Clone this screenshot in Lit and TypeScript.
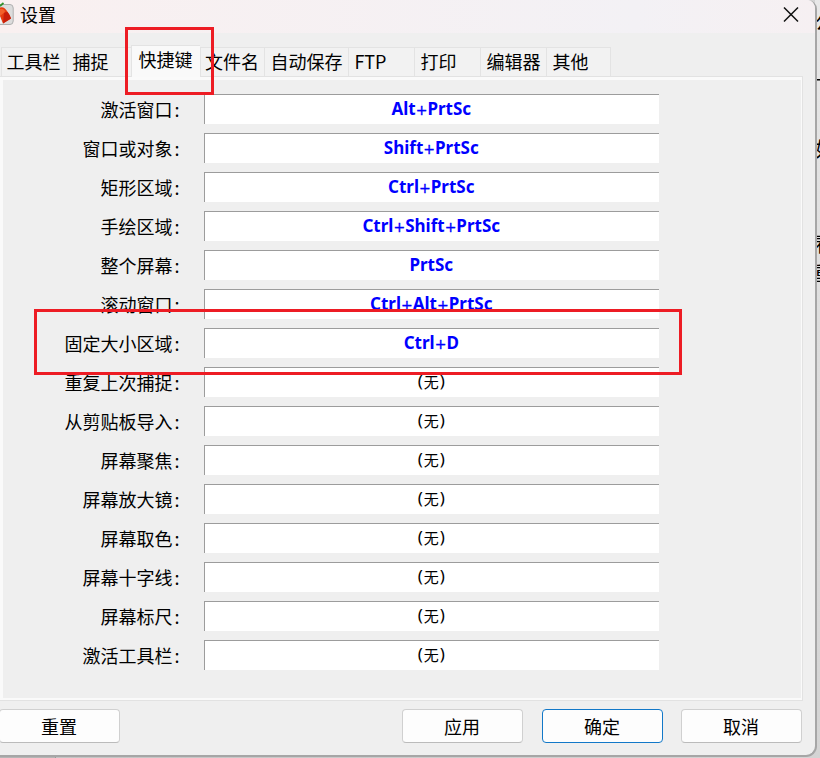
import { LitElement, html, css } from "lit";
import { customElement } from "lit/decorators.js";
import { classMap } from "lit/directives/class-map.js";
import { styleMap } from "lit/directives/style-map.js";

interface Tab { label: string; width: number; active?: boolean }

const TABS: Tab[] = [
  { label: "工具栏", width: 65 },
  { label: "捕捉", width: 65 },
  { label: "快捷键", width: 69, active: true },
  { label: "文件名", width: 64 },
  { label: "自动保存", width: 84 },
  { label: "FTP", width: 66 },
  { label: "打印", width: 66 },
  { label: "编辑器", width: 66 },
  { label: "其他", width: 65 },
];

const SHORTCUTS: [string, string][] = [
  ["激活窗口", "Alt+PrtSc"],
  ["窗口或对象", "Shift+PrtSc"],
  ["矩形区域", "Ctrl+PrtSc"],
  ["手绘区域", "Ctrl+Shift+PrtSc"],
  ["整个屏幕", "PrtSc"],
  ["滚动窗口", "Ctrl+Alt+PrtSc"],
  ["固定大小区域", "Ctrl+D"],
  ["重复上次捕捉", ""],
  ["从剪贴板导入", ""],
  ["屏幕聚焦", ""],
  ["屏幕放大镜", ""],
  ["屏幕取色", ""],
  ["屏幕十字线", ""],
  ["屏幕标尺", ""],
  ["激活工具栏", ""],
];

@customElement("app-root")
export class AppRoot extends LitElement {
  static styles = css`
    :host {
      display: block; position: relative; width: 820px; height: 758px; overflow: hidden;
      background: linear-gradient(90deg, #b5b5b5, #b5b5b5 55px, #999 55px, #999 56px, #c4c4c4 56px, #d4d4d4);
      font: 18px/24px "Noto Sans CJK SC", sans-serif; color: #000;
    }
    * { box-sizing: border-box; }
    .behind { position: absolute; left: 815px; top: 0; width: 5px; height: 758px; overflow: hidden;
      background: linear-gradient(#e8e8e8, #e0e0e0 30%, #d4d4d4); }
    .glyph { position: absolute; white-space: nowrap; font-size: 20px; line-height: 24px; }
    .window {
      position: relative; width: 817px; height: 757px; background: #efefef;
      border: solid #a6a6a6; border-width: 0 2px 2px 0; border-radius: 0 9px 11px 0;
      display: flex; flex-direction: column; overflow: hidden;
    }
    .title { height: 33px; flex: none; display: flex; background: linear-gradient(90deg, #f9f0f0, #f3f1f5 78%, #f6f0f2); }
    .logo { width: 14px; height: 26px; flex: none; }
    .name { margin: 2px 0 0 6px; flex: 1; }
    .close { width: 16px; height: 16px; margin: 7px 16.5px 0 0; }
    .tabs { height: 43px; flex: none; display: flex; align-items: flex-end; padding-left: 1px; }
    .tab { height: 29px; border: 1px solid #e3e3e3; border-width: 1px 0 0 1px; background: #f2f2f2; padding: 1px 0 0 5.4px; white-space: nowrap; flex: none; }
    .tab:first-child { padding-left: 4.5px; }
    .tab:last-child { border-right-width: 1px; }
    .tab.active { height: 32px; margin-bottom: -1px; position: relative; background: #f9f9f9; padding: 1px 0 0 6.5px; }
    .active + .tab { padding-left: 4px; }
    .panel { width: 803px; height: 625px; flex: none; border: 1px solid #e2e2e2; border-left: 0; }
    .inner { height: 623px; border: solid #fafafa; border-width: 3px 1px 2px 3px; padding-top: 14px; display: flex; flex-direction: column; gap: 9px; }
    .row { height: 30px; display: flex; }
    .label { width: 201px; padding: 3px 17.5px 0 0; text-align: right; white-space: nowrap; }
    .colon { display: inline-block; width: 14px; text-align: left; padding-left: 2px; }
    .field { width: 455px; height: 30px; background: #fff; border: solid #9c9c9c; border-width: 1px 0 0 1px; padding-right: 1.5px; display: flex; justify-content: center; white-space: nowrap; }
    .key { margin-top: 2px; font: bold 17px/24px "Noto Sans", sans-serif; color: #00f; }
    .plus { font: 14px/20px "DejaVu Sans", sans-serif; -webkit-text-stroke: 0.35px #00f; }
    .none { font-size: 15px; margin-top: 2px; display: flex; }
    .paren { font: 17px/22px "Noto Sans", sans-serif; width: 7px; text-align: center; }
    .footer { display: flex; padding-top: 8px; }
    .btn { width: 121px; height: 34px; flex: none; border: 1px solid #d0d0d0; border-bottom-color: #bbb; border-radius: 4px; background: #fdfdfd; font: inherit; padding: 0 1px 1px 0; color: #000; margin-right: 19px; }
    .reset { margin-left: -1px; margin-right: 282px; }
    .ok { border-color: #1278c8; margin-right: 18px; }
    .mark { position: absolute; border: 3px solid #ed1c24; }
    .m1 { left: 125px; top: 27px; width: 89px; height: 68px; }
    .m2 { left: 34px; top: 309px; width: 648px; height: 66px; }
  `;

  private combo(key: string) {
    return key.split("+").map((part, i) => html`${i ? html`<span class="plus">+</span>` : ""}${part}`);
  }

  render() {
    const behind: [string, number, number][] = [["公", 0, 10], ["下", -1, 75], ["如", 0, 137], ["看", -1, 232], ["重", -1, 261]];
    return html`
      <div class="behind">${behind.map(([t, x, y]) => html`<span class="glyph" style=${styleMap({ left: x + "px", top: y + "px" })}>${t}</span>`)}</div>
      <div class="window">
        <div class="title">
          <svg class="logo" viewBox="0 0 14 26">
            <path d="M-3 4.500H10Q13.200 4.500 13.200 8V21Q13.200 24.500 10 24.500H-3Z" fill="#dcdcdc" stroke="#b0b0b0"/>
            <path d="M0 7.500Q4 6 7 11Q9.500 14 11 18.500L3 23.500L0 16Z" fill="#e63c10"/>
            <path d="M4 12.500L7.500 12Q9.500 14 11 18.500L3 23.500Z" fill="#c81e0a"/>
            <path d="M0 9Q4 8 5 12L0 16Z" fill="#f2602a"/>
            <path d="M0 17L2.500 23.500H0Z" fill="#f4f4f4"/>
            <path d="M0 6L3.500 3" stroke="#31912b" stroke-width="1.800"/>
          </svg>
          <span class="name">设置</span>
          <svg class="close" viewBox="0 0 16 16"><path d="M1 .5L15 14.500M15 .5L1 14.500" stroke="#111" stroke-width="1.500" fill="none"/></svg>
        </div>
        <div class="tabs">${TABS.map((t) => html`<div class=${classMap({ tab: true, active: !!t.active })} style=${styleMap({ width: t.width + "px" })}>${t.label}</div>`)}</div>
        <div class="panel"><div class="inner">
          ${SHORTCUTS.map(([label, key]) => html`<div class="row">
            <div class="label">${label}<span class="colon">:</span></div>
            <div class="field">${key
              ? html`<span class="key">${this.combo(key)}</span>`
              : html`<span class="none"><span class="paren">(</span>无<span class="paren">)</span></span>`}</div>
          </div>`)}
        </div></div>
        <div class="footer">
          <button class="btn reset">重置</button><button class="btn">应用</button><button class="btn ok">确定</button><button class="btn">取消</button>
        </div>
      </div>
      <div class="mark m1"></div><div class="mark m2"></div>
    `;
  }
}
